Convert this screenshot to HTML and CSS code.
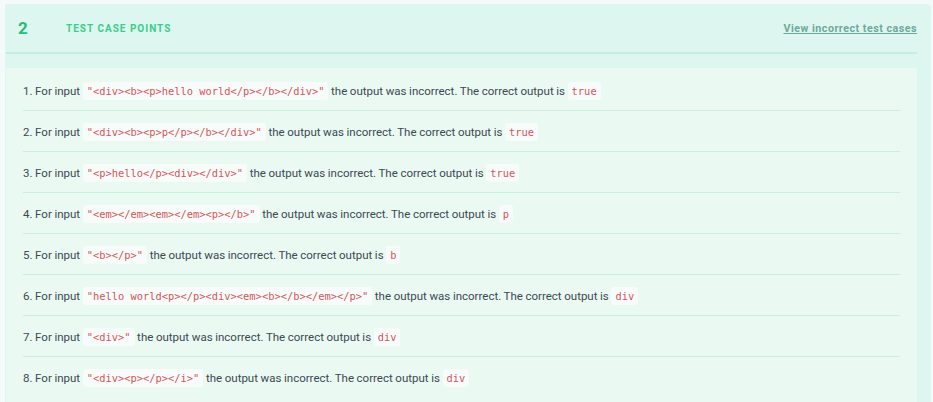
FILE: index.html
```html
<!DOCTYPE html>
<html>
<head>
<meta charset="utf-8">
<link rel="stylesheet" href="styles.css">
</head>
<body>
<section class="panel">
  <header class="panel-head">
    <span class="num">2</span>
    <span class="title">TEST CASE POINTS</span>
    <a class="link" href="#">View incorrect test cases</a>
  </header>
  <div class="list">
    <div class="row">1. For input <code>"&lt;div&gt;&lt;b&gt;&lt;p&gt;hello world&lt;/p&gt;&lt;/b&gt;&lt;/div&gt;"</code> the output was incorrect. The correct output is <code>true</code></div>
    <div class="row">2. For input <code>"&lt;div&gt;&lt;b&gt;&lt;p&gt;p&lt;/p&gt;&lt;/b&gt;&lt;/div&gt;"</code> the output was incorrect. The correct output is <code>true</code></div>
    <div class="row">3. For input <code>"&lt;p&gt;hello&lt;/p&gt;&lt;div&gt;&lt;/div&gt;"</code> the output was incorrect. The correct output is <code>true</code></div>
    <div class="row">4. For input <code>"&lt;em&gt;&lt;/em&gt;&lt;em&gt;&lt;/em&gt;&lt;p&gt;&lt;/b&gt;"</code> the output was incorrect. The correct output is <code>p</code></div>
    <div class="row">5. For input <code>"&lt;b&gt;&lt;/p&gt;"</code> the output was incorrect. The correct output is <code>b</code></div>
    <div class="row">6. For input <code>"hello world&lt;p&gt;&lt;/p&gt;&lt;div&gt;&lt;em&gt;&lt;b&gt;&lt;/b&gt;&lt;/em&gt;&lt;/p&gt;"</code> the output was incorrect. The correct output is <code>div</code></div>
    <div class="row">7. For input <code>"&lt;div&gt;"</code> the output was incorrect. The correct output is <code>div</code></div>
    <div class="row">8. For input <code>"&lt;div&gt;&lt;p&gt;&lt;/p&gt;&lt;/i&gt;"</code> the output was incorrect. The correct output is <code>div</code></div>
  </div>
</section>
</body>
</html>
```
FILE: styles.css
```css
html, body {
  margin: 0;
  padding: 0;
}
body {
  background: #f4f9fa;
  font-family: Roboto, "Liberation Sans", sans-serif;
  overflow: hidden;
  height: 402px;
}
.panel {
  margin: 4px 2px 0 5px;
  background: #ddf7f0;
  border-radius: 0 4px 0 0;
  padding: 0 14px 0 1px;
  height: 398px;
  overflow: hidden;
}
.panel-head {
  display: flex;
  align-items: center;
  height: 48px;
  border-bottom: 2px solid #c4eedf;
}
.num {
  font-size: 17px;
  font-weight: 700;
  color: #25bd77;
  margin-left: 12px;
  width: 48px;
}
.title {
  font-size: 10px;
  font-weight: 700;
  letter-spacing: 1px;
  color: #3ccd8b;
}
.link {
  margin-left: auto;
  font-size: 10.7px;
  font-weight: 700;
  letter-spacing: 0.5px;
  color: #6ea89d;
  text-decoration: underline;
}
.list {
  margin-top: 14px;
  background: #eafaf2;
  padding: 11px 17px 0;
  height: 400px;
}
.row {
  font-size: 11.5px;
  color: #3d4852;
  line-height: 18px;
  padding: 12px 0 10px;
  border-bottom: 1px solid #c9efdd;
  white-space: nowrap;
  word-spacing: -0.25px;
}
.row:first-child {
  padding-top: 3px;
}
.row:last-child {
  border-bottom: none;
}
code {
  display: inline-block;
  font-family: "DejaVu Sans Mono", "Liberation Mono", monospace;
  font-size: 10.4px;
  color: #d6545a;
  background: #f7fcfb;
  padding: 0 4px;
  border-radius: 3px;
  line-height: 18px;
  word-spacing: 0;
}
```
